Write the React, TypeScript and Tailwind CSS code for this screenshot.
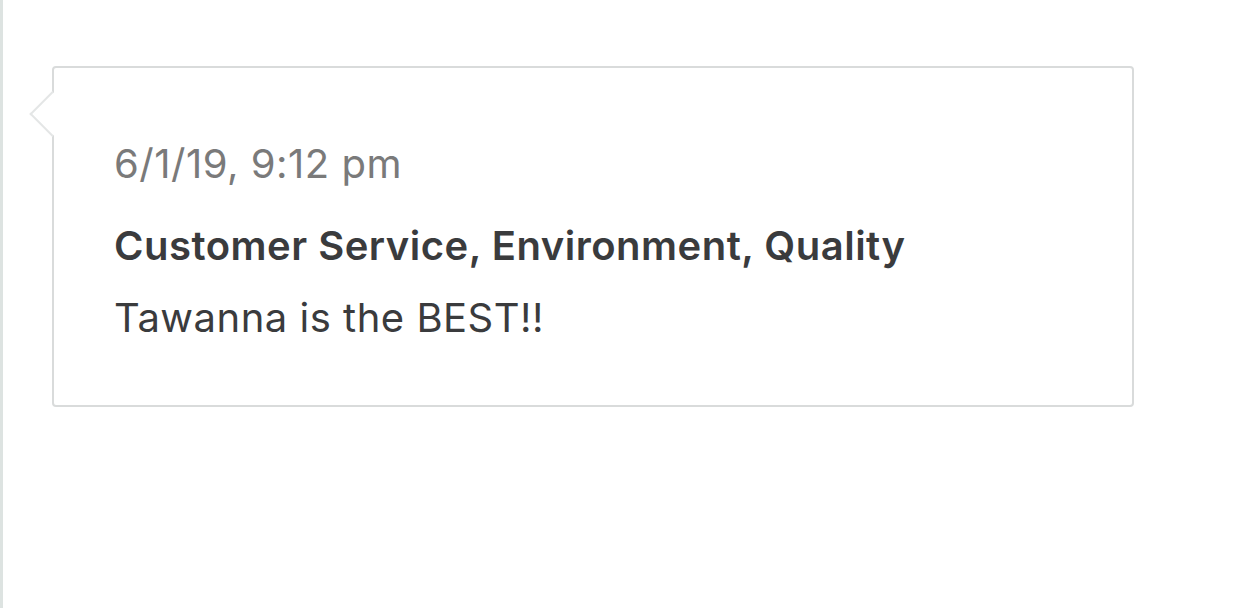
export default function App() {
    return (
        <div className="flex h-[608px] w-[1242px] bg-white" style={{ fontFamily: 'Inter, "Open Sans", sans-serif' }}>
            {/* timeline rail */}
            <div className="h-full w-[3px] bg-[#dde3e1]" />

            <div className="pl-[49px] pt-[66px]">
                <div className="relative h-[341px] w-[1082px] rounded-[4px] border-2 border-[#d9dbdb] bg-white pl-[60px] pt-[73px]">
                    {/* pointer */}
                    <div className="absolute -left-[18px] top-[30px] h-[32px] w-[32px] rotate-45 border-b-2 border-l-2 border-[#e4e6e6] bg-white" />

                    <p className="text-[40px] leading-[46px] tracking-[0.5px] text-[#7a7a7a]">6/1/19, 9:12 pm</p>
                    <p className="mt-[36px] text-[40px] font-semibold leading-[46px] tracking-[0.5px] text-[#3a3b3d]">
                        Customer Service, Environment, Quality
                    </p>
                    <p className="mt-[26px] text-[40px] leading-[46px] tracking-[0.5px] text-[#3a3b3d]">Tawanna is the BEST!!</p>
                </div>
            </div>
        </div>
    );
}
